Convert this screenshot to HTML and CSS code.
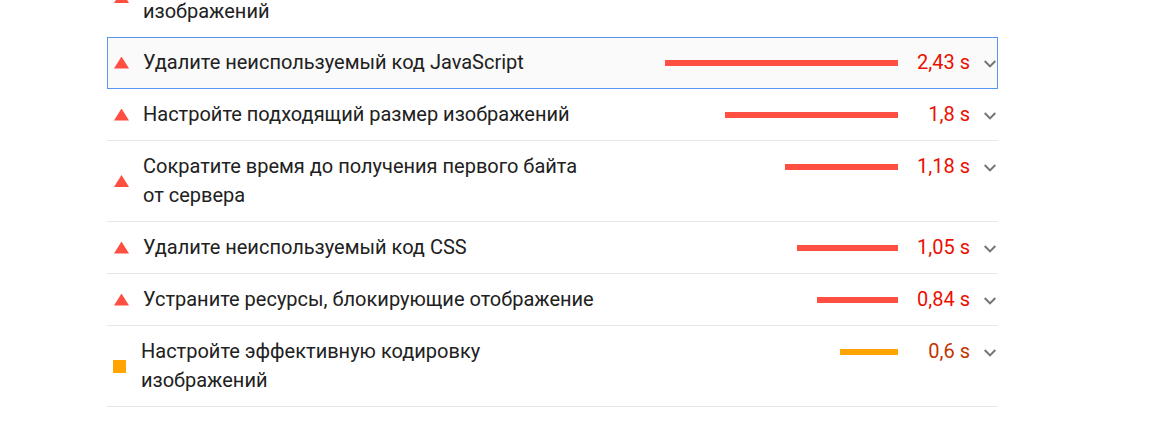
FILE: index.html
```html
<!DOCTYPE html>
<html lang="ru">
  <head>
    <meta charset="UTF-8" />
    <title>Возможности</title>
    <link rel="stylesheet" href="styles.css">
  </head>

  <body>
    <div class="audits">
      <div class="audit">
        <span class="icon fail"></span>
        <span class="title">Используйте современные форматы изображений</span>
        <span class="bar-wrap"><span class="bar fail" style="width: 62px"></span></span>
        <span class="value fail">0,65 s</span>
        <svg class="chevron" viewBox="6 8.5 12 7.5"><path d="M16.59 8.59L12 13.17 7.41 8.59 6 10l6 6 6-6z" /></svg>
      </div>
      <div class="audit selected">
        <span class="icon fail"></span>
        <span class="title">Удалите неиспользуемый код JavaScript</span>
        <span class="bar-wrap"><span class="bar fail" style="width: 233px"></span></span>
        <span class="value fail">2,43 s</span>
        <svg class="chevron" viewBox="6 8.5 12 7.5"><path d="M16.59 8.59L12 13.17 7.41 8.59 6 10l6 6 6-6z" /></svg>
      </div>
      <div class="audit">
        <span class="icon fail"></span>
        <span class="title">Настройте подходящий размер изображений</span>
        <span class="bar-wrap"><span class="bar fail" style="width: 173px"></span></span>
        <span class="value fail">1,8 s</span>
        <svg class="chevron" viewBox="6 8.5 12 7.5"><path d="M16.59 8.59L12 13.17 7.41 8.59 6 10l6 6 6-6z" /></svg>
      </div>
      <div class="audit">
        <span class="icon fail"></span>
        <span class="title">Сократите время до получения первого байта от сервера</span>
        <span class="bar-wrap"><span class="bar fail" style="width: 113px"></span></span>
        <span class="value fail">1,18 s</span>
        <svg class="chevron" viewBox="6 8.5 12 7.5"><path d="M16.59 8.59L12 13.17 7.41 8.59 6 10l6 6 6-6z" /></svg>
      </div>
      <div class="audit">
        <span class="icon fail"></span>
        <span class="title">Удалите неиспользуемый код CSS</span>
        <span class="bar-wrap"><span class="bar fail" style="width: 101px"></span></span>
        <span class="value fail">1,05 s</span>
        <svg class="chevron" viewBox="6 8.5 12 7.5"><path d="M16.59 8.59L12 13.17 7.41 8.59 6 10l6 6 6-6z" /></svg>
      </div>
      <div class="audit">
        <span class="icon fail"></span>
        <span class="title">Устраните ресурсы, блокирующие отображение</span>
        <span class="bar-wrap"><span class="bar fail" style="width: 81px"></span></span>
        <span class="value fail">0,84 s</span>
        <svg class="chevron" viewBox="6 8.5 12 7.5"><path d="M16.59 8.59L12 13.17 7.41 8.59 6 10l6 6 6-6z" /></svg>
      </div>
      <div class="audit">
        <span class="icon average"></span>
        <span class="title">Настройте эффективную кодировку изображений</span>
        <span class="bar-wrap"><span class="bar average" style="width: 58px"></span></span>
        <span class="value average">0,6 s</span>
        <svg class="chevron" viewBox="6 8.5 12 7.5"><path d="M16.59 8.59L12 13.17 7.41 8.59 6 10l6 6 6-6z" /></svg>
      </div>
    </div>
  </body>
</html>
```

FILE: styles.css
```css
body {
  margin: 0;
  font-family: Roboto, "Liberation Sans", sans-serif;
  font-size: 20px;
  color: #212121;
  background: #fff;
}

.audits {
  width: 891px;
  margin: -43px 0 0 107px;
}

.audit {
  display: flex;
  align-items: flex-start;
  padding: 11px 2px 11px 6px;
  line-height: 29px;
  border-bottom: 1px solid #e8e8e8;
}

.audit.selected {
  margin-top: -1px;
  background: #fafafa;
  outline: 1px solid #5a95f2;
  outline-offset: -1px;
}

.icon {
  flex: none;
  align-self: center;
}

.icon.fail {
  width: 15px;
  height: 12px;
  margin: 0 14px 0 1px;
  background: #ff4e42;
  clip-path: polygon(50% 0, 100% 100%, 0 100%);
}

.icon.average {
  width: 13px;
  height: 13px;
  margin-right: 15px;
  background: #ffa400;
}

.title {
  flex: 0 0 458px;
}

.bar-wrap {
  flex: 1;
  display: flex;
  justify-content: flex-end;
  align-items: center;
  height: 29px;
}

.bar {
  height: 6px;
  margin-top: 1px;
}

.bar.fail {
  background: #ff4e42;
}

.bar.average {
  background: #ffa400;
}

.value {
  flex: 0 0 72px;
  text-align: right;
}

.value.fail {
  color: #eb0f00;
}

.value.average {
  color: #c33300;
}

.chevron {
  flex: none;
  width: 12px;
  height: 8px;
  margin: 12px 0 0 14px;
  fill: #757575;
}
```
